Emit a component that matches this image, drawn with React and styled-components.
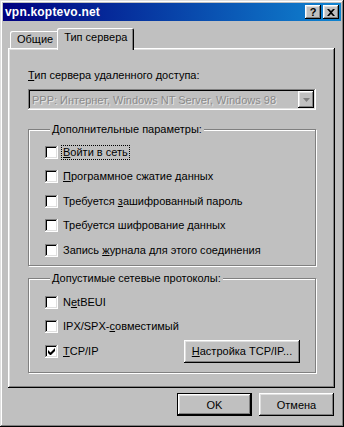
import React from "react";
import styled, { createGlobalStyle } from "styled-components";

const GlobalStyle = createGlobalStyle`
  html, body {
    margin: 0;
    padding: 0;
    background: #c0c0c0;
  }
  body {
    font-family: "Liberation Sans", Arial, sans-serif;
    font-size: 11px;
    color: #000;
  }
`;

const raised = `
  box-shadow: inset -1px -1px #000, inset 1px 1px #fff,
    inset -2px -2px #808080, inset 2px 2px #dfdfdf;
`;

const Window = styled.div`
  width: 344px;
  height: 427px;
  box-sizing: border-box;
  padding: 3px;
  background: #c0c0c0;
  display: flex;
  flex-direction: column;
  box-shadow: inset -1px -1px #000, inset 1px 1px #dfdfdf,
    inset -2px -2px #808080, inset 2px 2px #fff;
`;

const TitleBar = styled.div`
  height: 18px;
  display: flex;
  align-items: center;
  justify-content: space-between;
  padding: 0 2px 0 2px;
  background: linear-gradient(to right, #000080, #1084d0);
`;

const Title = styled.span`
  color: #fff;
  font-weight: bold;
  font-size: 12px;
  letter-spacing: 0.2px;
`;

const Controls = styled.div`
  display: flex;
  gap: 2px;
`;

const TitleButton = styled.div`
  width: 16px;
  height: 14px;
  background: #c0c0c0;
  display: flex;
  align-items: center;
  justify-content: center;
  font-weight: bold;
  font-size: 11px;
  line-height: 1;
  ${raised}
`;

const Body = styled.div`
  flex: 1;
  display: flex;
  flex-direction: column;
  padding: 7px 6px 0 5px;
`;

const TabRow = styled.div`
  display: flex;
  align-items: flex-end;
  height: 20px;
  padding-left: 2px;
  position: relative;
  z-index: 1;
`;

const Tab = styled.div`
  box-sizing: border-box;
  height: ${(p) => (p.$active ? "22px" : "17px")};
  margin: ${(p) => (p.$active ? "0 0 -2px -2px" : "0")};
  padding: ${(p) => (p.$active ? "3px 7px 0 7px" : "2px 6px 0 7px")};
  background: #c0c0c0;
  border-top-left-radius: 2px;
  border-top-right-radius: 2px;
  box-shadow: inset 1px 1px #fff, inset -1px 0 #000, inset -2px 0 #808080;
`;

const Panel = styled.div`
  height: 340px;
  box-sizing: border-box;
  padding: 20px 19px 0 20px;
  display: flex;
  flex-direction: column;
  ${raised}
`;

const FieldLabel = styled.div`
  height: 14px;
  line-height: 14px;
`;

const Combo = styled.div`
  margin-top: 7px;
  height: 21px;
  box-sizing: border-box;
  padding: 2px 2px 2px 4px;
  display: flex;
  align-items: center;
  justify-content: space-between;
  background: #c0c0c0;
  color: #8a8a8a;
  text-shadow: 1px 1px #e6e6e6;
  box-shadow: inset -1px -1px #fff, inset 1px 1px #808080,
    inset -2px -2px #dfdfdf, inset 2px 2px #000;
`;

const ComboArrow = styled.div`
  width: 16px;
  height: 17px;
  display: flex;
  align-items: center;
  justify-content: center;
  ${raised}
`;

const Group = styled.fieldset`
  margin: ${(p) => p.$top}px 0 0 0;
  padding: 0 0 0 16px;
  height: ${(p) => p.$height}px;
  box-sizing: border-box;
  border: 1px solid #808080;
  box-shadow: inset 1px 1px #fff, 1px 1px #fff;
  display: flex;
  flex-direction: column;
`;

const Legend = styled.legend`
  padding: 0 2px;
  margin-left: 5px;
  background: #c0c0c0;
  line-height: 13px;
`;

const Rows = styled.div`
  display: flex;
  flex-direction: column;
  padding-top: ${(p) => p.$top}px;
`;

const Row = styled.div`
  height: 24.5px;
  display: flex;
  align-items: center;
`;

const Box = styled.div`
  width: 13px;
  height: 13px;
  flex: none;
  background: #fff;
  display: flex;
  align-items: center;
  justify-content: center;
  box-shadow: inset -1px -1px #fff, inset 1px 1px #808080,
    inset -2px -2px #dfdfdf, inset 2px 2px #000;
`;

const Caption = styled.span`
  margin-left: 4px;
  padding: 0 1px;
  line-height: 13px;
  outline: ${(p) => (p.$focus ? "1px dotted #000" : "none")};
`;

const U = styled.span`
  text-decoration: underline;
`;

const Button = styled.div`
  box-sizing: border-box;
  width: ${(p) => p.$w}px;
  height: ${(p) => p.$h}px;
  display: flex;
  align-items: center;
  justify-content: center;
  background: #c0c0c0;
  ${raised}
  ${(p) =>
    p.$default &&
    `border: 1px solid #000;`}
`;

const SideButton = styled(Button)`
  margin-left: auto;
  margin-right: 15px;
`;

const Footer = styled.div`
  display: flex;
  justify-content: flex-end;
  gap: 7px;
  padding-top: 5px;
  padding-right: 1px;
`;

const Check = ({ checked }) => (
  <Box>
    {checked && (
      <svg width="7" height="7" viewBox="0 0 7 7">
        <path d="M0 2v3l2 2h1l4-4V0L2.5 4.5z" fill="#000" />
      </svg>
    )}
  </Box>
);

const Option = ({ checked, focus, children, extra }) => (
  <Row>
    <Check checked={checked} />
    <Caption $focus={focus}>{children}</Caption>
    {extra}
  </Row>
);

export default function App() {
  return (
    <>
      <GlobalStyle />
      <Window>
        <TitleBar>
          <Title>vpn.koptevo.net</Title>
          <Controls>
            <TitleButton>?</TitleButton>
            <TitleButton>
              <svg width="8" height="7" viewBox="0 0 8 7">
                <path
                  d="M0 0h2l2 2 2-2h2L5 3.5 8 7H6L4 5 2 7H0l3-3.5z"
                  fill="#000"
                />
              </svg>
            </TitleButton>
          </Controls>
        </TitleBar>
        <Body>
          <TabRow>
            <Tab>Общие</Tab>
            <Tab $active>Тип сервера</Tab>
          </TabRow>
          <Panel>
            <FieldLabel>
              <U>Т</U>ип сервера удаленного доступа:
            </FieldLabel>
            <Combo>
              <span>PPP: Интернет, Windows NT Server, Windows 98</span>
              <ComboArrow>
                <svg width="7" height="4" viewBox="0 0 7 4">
                  <path d="M0 0h7L3.5 4z" fill="#808080" />
                </svg>
              </ComboArrow>
            </Combo>
            <Group $top={13} $height={143}>
              <Legend>Дополнительные параметры:</Legend>
              <Rows $top={4}>
                <Option focus>
                  <U>В</U>ойти в сеть
                </Option>
                <Option>
                  <U>П</U>рограммное сжатие данных
                </Option>
                <Option>
                  Требуется <U>з</U>ашифрованный пароль
                </Option>
                <Option>
                  Требуется шифрование <U>д</U>анных
                </Option>
                <Option>
                  Запись <U>ж</U>урнала для этого соединения
                </Option>
              </Rows>
            </Group>
            <Group $top={6} $height={101}>
              <Legend>Допустимые сетевые протоколы:</Legend>
              <Rows $top={5}>
                <Option>
                  N<U>e</U>tBEUI
                </Option>
                <Option>
                  IPX/SPX-<U>с</U>овместимый
                </Option>
                <Option
                  checked
                  extra={
                    <SideButton $w={116} $h={23}>
                      <span>
                        <U>Н</U>астройка TCP/IP...
                      </span>
                    </SideButton>
                  }
                >
                  <U>T</U>CP/IP
                </Option>
              </Rows>
            </Group>
          </Panel>
          <Footer>
            <Button $w={75} $h={23} $default>
              OK
            </Button>
            <Button $w={75} $h={23}>
              Отмена
            </Button>
          </Footer>
        </Body>
      </Window>
    </>
  );
}
